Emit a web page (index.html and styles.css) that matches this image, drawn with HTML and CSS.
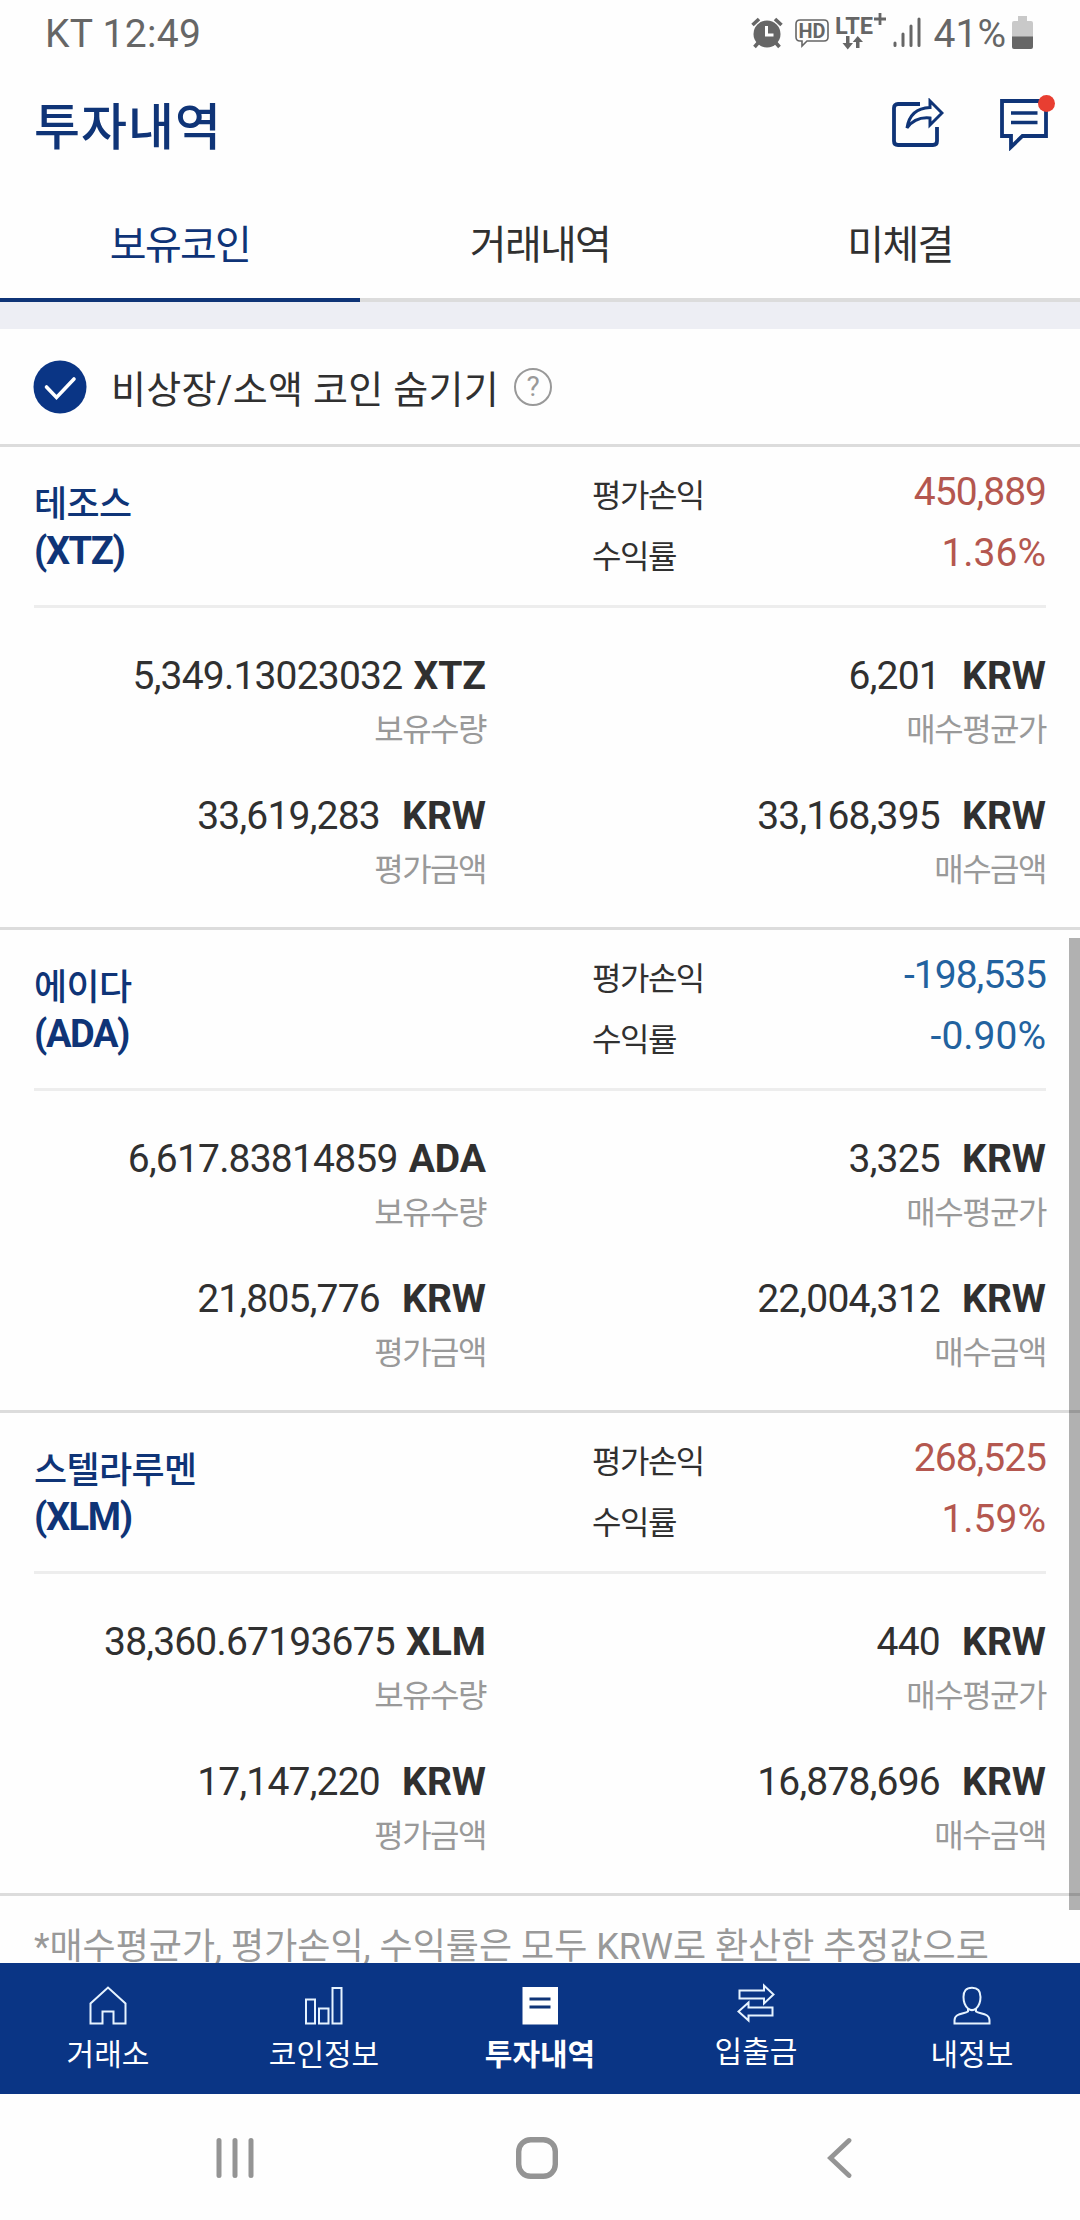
FILE: index.html
```
<!DOCTYPE html>
<html lang="ko">
<head>
    <meta charset="UTF-8">
    <meta name="viewport" content="width=device-width, initial-scale=1.0">
    <title>투자내역</title>
    <link rel="stylesheet" href="styles.css">
</head>
<body>
    <div class="status-bar">
        <span class="carrier">KT 12:49</span>
        <div class="status-icons">
            <svg class="icon-alarm" width="32" height="32" viewBox="0 0 32 32">
                <circle cx="16" cy="17" r="13.5" fill="#666"/>
                <path d="M1.500 8 L8 2 M30.500 8 L24 2 M7 26 L3.500 30 M25 26 L28.500 30" stroke="#666" stroke-width="3.600" fill="none"/>
                <path d="M15.500 9 V18 H22.500" stroke="#fff" stroke-width="3" fill="none"/>
            </svg>
            <svg class="icon-hd" width="34" height="29" viewBox="0 0 34 29">
                <path d="M5 1 H29 Q33 1 33 5 V18 Q33 22 29 22 H12 L7 27 V22 H5 Q1 22 1 18 V5 Q1 1 5 1 Z" stroke="#666" stroke-width="1.600" fill="none"/>
                <text class="hd-text" x="17" y="18.500" text-anchor="middle" textLength="27" lengthAdjust="spacingAndGlyphs">HD</text>
            </svg>
            <svg class="icon-lte" width="52" height="40" viewBox="0 0 52 40">
                <text class="lte-text" x="0" y="22" textLength="38" lengthAdjust="spacingAndGlyphs">LTE</text>
                <path d="M45 1 V13 M39 7 H51" stroke="#666" stroke-width="2.800"/>
                <path d="M11 24 H14.500 V31 H18 L12.750 37.500 L7.500 31 H11 Z M21 36 V30 H17.700 L22.750 24 L28 30 H24.500 V36 Z" fill="#666"/>
            </svg>
            <svg class="icon-signal" width="28" height="30" viewBox="0 0 28 30">
                <path d="M2 26 V28.500 M10 17 V28.500 M18 9 V28.500 M26 2 V28.500" stroke="#666" stroke-width="3" stroke-linecap="round"/>
            </svg>
            <span class="battery-text">41%</span>
            <svg class="icon-battery" width="21" height="33" viewBox="0 0 21 33">
                <path d="M6 0 H15 V5 H19 Q21 5 21 7 V21 H0 V7 Q0 5 2 5 H6 Z" fill="#c9c9c9"/>
                <path d="M0 20.500 H21 V31 Q21 33 19 33 H2 Q0 33 0 31 Z" fill="#666"/>
            </svg>
        </div>
    </div>

    <header class="header">
        <h1>투자내역</h1>
        <div class="header-icons">
            <svg class="icon-share" width="52" height="50" viewBox="0 0 52 50">
                <path d="M28 6 H6 Q2 6 2 10 V43 Q2 47 6 47 H41 Q45 47 45 43 V29" stroke="#0f3477" stroke-width="3.800" fill="none"/>
                <path d="M38 3 L50 15 L38 27 V20 C28 19 20 23 15 30 C17 17 25 10 38 9.500 Z" stroke="#0f3477" stroke-width="3" fill="none"/>
            </svg>
            <div class="message">
                <svg width="48" height="52" viewBox="0 0 48 52">
                    <path d="M2 2 H46 V37 H22.500 L11 48 V37 H2 Z" stroke="#0f3477" stroke-width="3.800" fill="none"/>
                    <path d="M11 14 H37.500 M11 23.500 H37.500" stroke="#0f3477" stroke-width="3.600"/>
                </svg>
                <span class="badge"></span>
            </div>
        </div>
    </header>

    <nav class="tabs">
        <div class="tab active">보유코인</div>
        <div class="tab">거래내역</div>
        <div class="tab">미체결</div>
    </nav>

    <div class="filter">
        <svg width="54" height="54" viewBox="0 0 54 54">
            <circle cx="27" cy="27" r="26.500" fill="#0a3585"/>
            <path d="M13.500 27 L23.500 37.500 L41 19" stroke="#fff" stroke-width="3.600" fill="none" stroke-linecap="round"/>
        </svg>
        <span class="filter-text">비상장/소액 코인 숨기기</span>
        <span class="help">?</span>
    </div>

    <main class="coins">
        <section class="coin">
            <div class="summary">
                <div class="name">테조스<br><span class="ticker">(XTZ)</span></div>
                <div class="profit-labels">평가손익<br>수익률</div>
                <div class="profit up">450,889<br><span class="rate">1.36%</span></div>
            </div>
            <div class="details">
                <div class="cell">
                    <div class="value">5,349.13023032 <b>XTZ</b></div>
                    <div class="label">보유수량</div>
                </div>
                <div class="cell">
                    <div class="value">6,201 &nbsp;<b>KRW</b></div>
                    <div class="label">매수평균가</div>
                </div>
                <div class="cell">
                    <div class="value">33,619,283 &nbsp;<b>KRW</b></div>
                    <div class="label">평가금액</div>
                </div>
                <div class="cell">
                    <div class="value">33,168,395 &nbsp;<b>KRW</b></div>
                    <div class="label">매수금액</div>
                </div>
            </div>
        </section>

        <section class="coin">
            <div class="summary">
                <div class="name">에이다<br><span class="ticker">(ADA)</span></div>
                <div class="profit-labels">평가손익<br>수익률</div>
                <div class="profit down">-198,535<br><span class="rate">-0.90%</span></div>
            </div>
            <div class="details">
                <div class="cell">
                    <div class="value">6,617.83814859 <b>ADA</b></div>
                    <div class="label">보유수량</div>
                </div>
                <div class="cell">
                    <div class="value">3,325 &nbsp;<b>KRW</b></div>
                    <div class="label">매수평균가</div>
                </div>
                <div class="cell">
                    <div class="value">21,805,776 &nbsp;<b>KRW</b></div>
                    <div class="label">평가금액</div>
                </div>
                <div class="cell">
                    <div class="value">22,004,312 &nbsp;<b>KRW</b></div>
                    <div class="label">매수금액</div>
                </div>
            </div>
        </section>

        <section class="coin">
            <div class="summary">
                <div class="name">스텔라루멘<br><span class="ticker">(XLM)</span></div>
                <div class="profit-labels">평가손익<br>수익률</div>
                <div class="profit up">268,525<br><span class="rate">1.59%</span></div>
            </div>
            <div class="details">
                <div class="cell">
                    <div class="value">38,360.67193675 <b>XLM</b></div>
                    <div class="label">보유수량</div>
                </div>
                <div class="cell">
                    <div class="value">440 &nbsp;<b>KRW</b></div>
                    <div class="label">매수평균가</div>
                </div>
                <div class="cell">
                    <div class="value">17,147,220 &nbsp;<b>KRW</b></div>
                    <div class="label">평가금액</div>
                </div>
                <div class="cell">
                    <div class="value">16,878,696 &nbsp;<b>KRW</b></div>
                    <div class="label">매수금액</div>
                </div>
            </div>
        </section>

        <p class="notice">*매수평균가, 평가손익, 수익률은 모두 KRW로 환산한 추정값으로</p>
        <div class="scrollbar"></div>
    </main>

    <nav class="bottom-nav">
        <div class="nav-item">
            <svg width="38" height="40" viewBox="0 0 38 40">
                <path d="M1.500 37.500 V17.500 L19 1.500 L36.500 17.500 V37.500 H24.500 V25.500 H13.500 V37.500 Z" stroke="#e6f3ff" stroke-width="2" fill="none"/>
            </svg>
            <span>거래소</span>
        </div>
        <div class="nav-item">
            <svg width="38" height="40" viewBox="0 0 38 40">
                <path d="M1 13.500 H10 V37.500 H1 Z M14 22.500 H23.500 V37.500 H14 Z M27.500 2 H36.500 V37.500 H27.500 Z" stroke="#e6f3ff" stroke-width="2" fill="none"/>
            </svg>
            <span>코인정보</span>
        </div>
        <div class="nav-item selected">
            <svg width="38" height="40" viewBox="0 0 38 40">
                <path d="M1.500 1 H37 V38.500 H1.500 Z" fill="#fff"/>
                <path d="M8.500 13 H29.500 M8.500 21 H29.500" stroke="#0f3477" stroke-width="2.800"/>
            </svg>
            <span>투자내역</span>
        </div>
        <div class="nav-item transfer">
            <svg width="38" height="40" viewBox="0 0 38 40">
                <path d="M2.500 7.500 H27 V2.500 L36.500 11.500 L27 20.500 V15.500 H2.500 Z M35.500 24.500 H11.500 V19.500 L1.500 28.500 L11.500 37.500 V32.500 H35.500 Z" stroke="#e6f3ff" stroke-width="2" fill="none"/>
            </svg>
            <span>입출금</span>
        </div>
        <div class="nav-item">
            <svg width="38" height="40" viewBox="0 0 38 40">
                <path d="M15 22.500 C11.500 19.500 10.500 16 10.500 11 C10.500 5 13 1.800 19 1.800 C25 1.800 27.500 5 27.500 11 C27.500 16 26.500 19.500 23 22.500 C20.500 24.500 17.500 24.500 15 22.500 V25.500 C11 28 1.500 27 1.500 34.500 V37.500 H36.500 V34.500 C36.500 27 27 28 23 25.500 V22.500" stroke="#e6f3ff" stroke-width="2" fill="none"/>
            </svg>
            <span>내정보</span>
        </div>
    </nav>

    <div class="system-nav">
        <svg width="40" height="42" viewBox="0 0 40 42">
            <path d="M4 3.500 V38.500 M20 3.500 V38.500 M36 3.500 V38.500" stroke="#949494" stroke-width="5" stroke-linecap="round"/>
        </svg>
        <svg class="home-button" width="44" height="44" viewBox="0 0 44 44">
            <rect x="3.700" y="3.700" width="36.600" height="36.600" rx="12" stroke="#949494" stroke-width="5.400" fill="none"/>
        </svg>
        <svg width="26" height="42" viewBox="0 0 26 42">
            <path d="M23 3.500 L4.500 21 L23 38.500" stroke="#949494" stroke-width="4.800" fill="none" stroke-linecap="round"/>
        </svg>
    </div>
</body>
</html>
```
FILE: styles.css
```
* {
    box-sizing: border-box;
}
body {
    margin: 0;
    width: 1080px;
    height: 2220px;
    overflow: hidden;
    background-color: #fefefe;
    color: #303030;
    font-family: Roboto, "Noto Sans CJK KR", sans-serif;
}
svg {
    display: block;
    flex: none;
}

/* phone status bar */
.status-bar {
    display: flex;
    justify-content: space-between;
    height: 68px;
    padding: 0 47px 0 45px;
    font-size: 39px;
    line-height: 69px;
    color: #666;
}
.carrier {
    letter-spacing: 0.3px;
}
.status-icons {
    display: flex;
    align-items: flex-start;
}
.icon-alarm {
    margin-top: 17px;
}
.icon-hd {
    margin: 19px 0 0 12px;
}
.icon-lte {
    margin: 12px 0 0 6px;
}
.icon-signal {
    margin: 17px 0 0 6px;
}
.icon-battery {
    margin: 16px 0 0 6px;
}
.battery-text {
    margin-left: 13px;
}
.hd-text {
    font-size: 20px;
    font-weight: 700;
    fill: #666;
}
.lte-text {
    font-size: 24px;
    font-weight: 700;
    fill: #666;
}

.header {
    display: flex;
    justify-content: space-between;
    height: 122px;
    padding: 27px 32px 0 34px;
}
.header h1 {
    margin: 0;
    font-size: 50px;
    font-weight: 500;
    line-height: 66px;
    letter-spacing: 1px;
    color: #0f3477;
}
.header-icons {
    display: flex;
    gap: 56px;
}
.icon-share {
    margin-top: 3px;
}
.message {
    position: relative;
    margin-top: 4px;
}
.badge {
    position: absolute;
    top: -4px;
    right: -7px;
    width: 17px;
    height: 17px;
    border-radius: 50%;
    background-color: #e83e31;
}

.tabs {
    display: flex;
    height: 112px;
    font-size: 40px;
    letter-spacing: -1.7px;
    text-align: center;
}
.tab {
    flex: 1;
    line-height: 112px;
    border-bottom: 4px solid #dcdcdc;
}
.tab.active {
    color: #0f3477;
    border-bottom-color: #0f3477;
}

.filter {
    display: flex;
    align-items: center;
    height: 145px;
    padding-left: 33px;
    border-top: 27px solid #edeef4;
    border-bottom: 3px solid #dcdcdc;
}
.filter-text {
    margin: 0 15px 0 24px;
    font-size: 38px;
    letter-spacing: 0.3px;
}
.help {
    width: 38px;
    height: 38px;
    border: 2px solid #999;
    border-radius: 50%;
    font-size: 28px;
    line-height: 34px;
    text-align: center;
    color: #999;
}

.coins {
    position: relative;
    height: 1516px;
    overflow: hidden;
}
.coin {
    height: 483px;
    border-bottom: 3px solid #dcdcdc;
}
.summary {
    display: flex;
    height: 161px;
    margin: 0 34px;
    border-bottom: 3px solid #ededed;
}
.name {
    width: 558px;
    padding-top: 35px;
    font-size: 36px;
    font-weight: 500;
    line-height: 46px;
    letter-spacing: -0.6px;
    color: #0f3477;
}
.ticker {
    font-size: 38px;
    font-weight: 700;
    letter-spacing: -1.4px;
}
.profit-labels {
    padding-top: 19px;
    font-size: 32px;
    line-height: 61px;
    letter-spacing: -1.5px;
}
.profit {
    flex: 1;
    padding-top: 15px;
    font-size: 39px;
    line-height: 61px;
    letter-spacing: -1px;
    text-align: right;
}
.rate {
    letter-spacing: 0;
}
.up {
    color: #b4574f;
}
.down {
    color: #22629f;
}
.details {
    display: grid;
    grid-template-columns: 452px 1fr;
    row-gap: 43px;
    padding: 45px 34px 0;
    text-align: right;
}
.value {
    font-size: 39px;
    line-height: 46px;
    letter-spacing: -0.8px;
    word-spacing: 2.2px;
}
.value b {
    letter-spacing: 0;
}
.label {
    margin-top: 11px;
    font-size: 32px;
    line-height: 40px;
    letter-spacing: -1.5px;
    color: #999;
}
.notice {
    margin: 0;
    padding: 25px 34px 0;
    font-size: 36px;
    line-height: 52px;
    white-space: nowrap;
    color: #999;
}
.scrollbar {
    position: absolute;
    top: 491px;
    right: 0;
    width: 11px;
    height: 972px;
    background-color: rgba(0, 0, 0, 0.3);
}

.bottom-nav {
    display: flex;
    height: 131px;
    background-color: #0a3585;
    color: #fff;
}
.nav-item {
    display: flex;
    flex: 1;
    flex-direction: column;
    align-items: center;
    padding-top: 23px;
    font-size: 30px;
    line-height: 40px;
}
.nav-item span {
    margin-top: 9px;
}
.nav-item.selected {
    font-weight: 700;
}
.nav-item.transfer {
    padding-top: 20px;
}

.system-nav {
    display: flex;
    align-items: center;
    height: 126px;
    padding: 2px 0 0 215px;
}
.home-button {
    margin: 0 267px 0 260px;
}
```
